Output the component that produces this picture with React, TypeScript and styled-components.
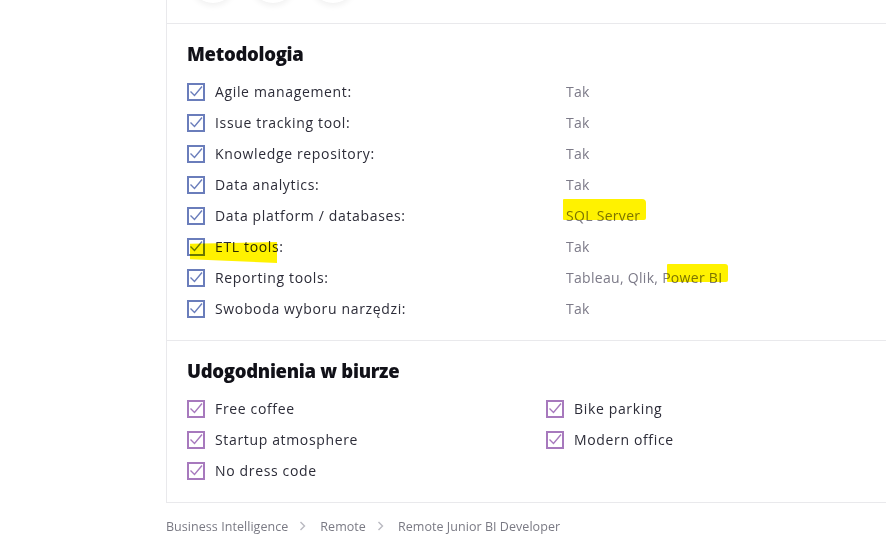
import styled, { createGlobalStyle } from 'styled-components';

const GlobalStyle = createGlobalStyle`
  html, body {
    margin: 0;
    padding: 0;
    background: #ffffff;
    overflow: hidden;
  }
  body {
    font-family: "Open Sans", "Liberation Sans", sans-serif;
  }
`

const Page = styled.div`
  width: 886px;
  height: 535px;
  padding-left: 166px;
  box-sizing: border-box;
  overflow: hidden;
`

const Card = styled.div`
  width: 760px;
  margin-top: -30px;
  border-left: 1px solid #e9e9ec;
  border-bottom: 1px solid #e9e9ec;
`

const ShareRow = styled.div`
  display: flex;
  gap: 16px;
  padding: 0 0 20px 24px;
  border-bottom: 1px solid #e9e9ec;
`

const ShareCircle = styled.div`
  width: 44px;
  height: 33px;
  border-radius: 0 0 22px 22px;
  background: #fff;
  box-shadow: 0 3px 6px rgba(0, 0, 0, 0.06);
`

const Section = styled.section<{ $last?: boolean }>`
  padding: 18px 20px 16px 20px;
  border-bottom: ${p => (p.$last ? 'none' : '1px solid #e9e9ec')};
`

const Heading = styled.h3`
  margin: 0 0 10px 0;
  font-family: "Open Sans", "Liberation Sans", sans-serif;
  font-size: 18.5px;
  line-height: 24px;
  font-weight: 800;
  letter-spacing: -0.3px;
  color: #111118;
`

const SpecList = styled.div`
  display: grid;
  grid-template-columns: 379px 1fr;
`

const Perks = styled.div`
  display: grid;
  grid-template-columns: 359px 1fr;
`

const Item = styled.div`
  display: flex;
  align-items: center;
  gap: 10px;
  height: 31px;
  font-size: 14px;
  letter-spacing: 0.65px;
  color: #2c2c38;
`

const Value = styled.div`
  display: flex;
  align-items: center;
  height: 31px;
  font-size: 14px;
  letter-spacing: 0.3px;
  color: #7c7a88;
`

const Label = styled.span`
  position: relative;
`

const Marker = styled.span`
  position: absolute;
  background: #fff200;
  mix-blend-mode: multiply;
  pointer-events: none;
`

const Crumbs = styled.nav`
  display: flex;
  align-items: center;
  height: 46px;
  font-size: 12.5px;
  letter-spacing: 0.05px;
  color: #7a7a84;
`

const Chevron = styled.span`
  display: inline-flex;
  margin: 0 14px 0 11px;
  color: #b9b9c0;
`

function Check({ color }: { color: string }) {
  return (
    <svg width="18" height="18" viewBox="0 0 18 18" style={{ flex: 'none' }}>
      <rect x="1" y="1" width="16" height="16" fill="none" stroke={color} strokeWidth="2" />
      <path d="M3.5 8.5 L7.5 12.5 L15 3.5" fill="none" stroke={color} strokeWidth="1.4" />
    </svg>
  )
}

function Arrow() {
  return (
    <svg width="7" height="10" viewBox="0 0 7 10">
      <path d="M1.5 1 L5.5 5 L1.5 9" fill="none" stroke="currentColor" strokeWidth="1.4" />
    </svg>
  )
}

const BLUE = '#6a7dbb'
const PURPLE = '#a779bd'

const methods: [string, string][] = [
  ['Agile management:', 'Tak'],
  ['Issue tracking tool:', 'Tak'],
  ['Knowledge repository:', 'Tak'],
  ['Data analytics:', 'Tak'],
  ['Data platform / databases:', 'SQL Server'],
  ['ETL tools:', 'Tak'],
  ['Reporting tools:', 'Tableau, Qlik, Power BI'],
  ['Swoboda wyboru narzędzi:', 'Tak'],
]

const perks = ['Free coffee', 'Bike parking', 'Startup atmosphere', 'Modern office', 'No dress code']

function renderValue(v: string) {
  if (v === 'SQL Server') {
    return (
      <Label>
        {v}
        <Marker style={{ left: -3, top: -7, width: 83, height: 21, borderRadius: '1px 4px 2px 1px' }} />
      </Label>
    )
  }
  if (v.includes('Power BI')) {
    return (
      <Label>
        {v}
        <Marker style={{ left: 101, top: -4, width: 61, height: 18, borderRadius: '1px 3px 2px 1px' }} />
      </Label>
    )
  }
  return v
}

export default function App() {
  return (
    <Page>
      <GlobalStyle />
      <Card>
        <ShareRow>
          <ShareCircle />
          <ShareCircle />
          <ShareCircle />
        </ShareRow>
        <Section>
          <Heading>Metodologia</Heading>
          <SpecList>
            {methods.map(([label, value]) => (
              <>
                <Item key={label}>
                  {label === 'ETL tools:' ? (
                    <Label style={{ display: 'flex', alignItems: 'center', gap: 10 }}>
                      <Check color={BLUE} />
                      {label}
                      <Marker style={{ left: 3, top: 5, width: 87, height: 21, clipPath: 'polygon(0 8%, 100% 0, 100% 100%, 0 82%)' }} />
                    </Label>
                  ) : (
                    <>
                      <Check color={BLUE} />
                      {label}
                    </>
                  )}
                </Item>
                <Value key={label + '-v'}>{renderValue(value)}</Value>
              </>
            ))}
          </SpecList>
        </Section>
        <Section $last>
          <Heading>Udogodnienia w biurze</Heading>
          <Perks>
            {perks.map(p => (
              <Item key={p}>
                <Check color={PURPLE} />
                {p}
              </Item>
            ))}
          </Perks>
        </Section>
      </Card>
      <Crumbs>
        Business Intelligence
        <Chevron><Arrow /></Chevron>
        Remote
        <Chevron><Arrow /></Chevron>
        Remote Junior BI Developer
      </Crumbs>
    </Page>
  )
}
